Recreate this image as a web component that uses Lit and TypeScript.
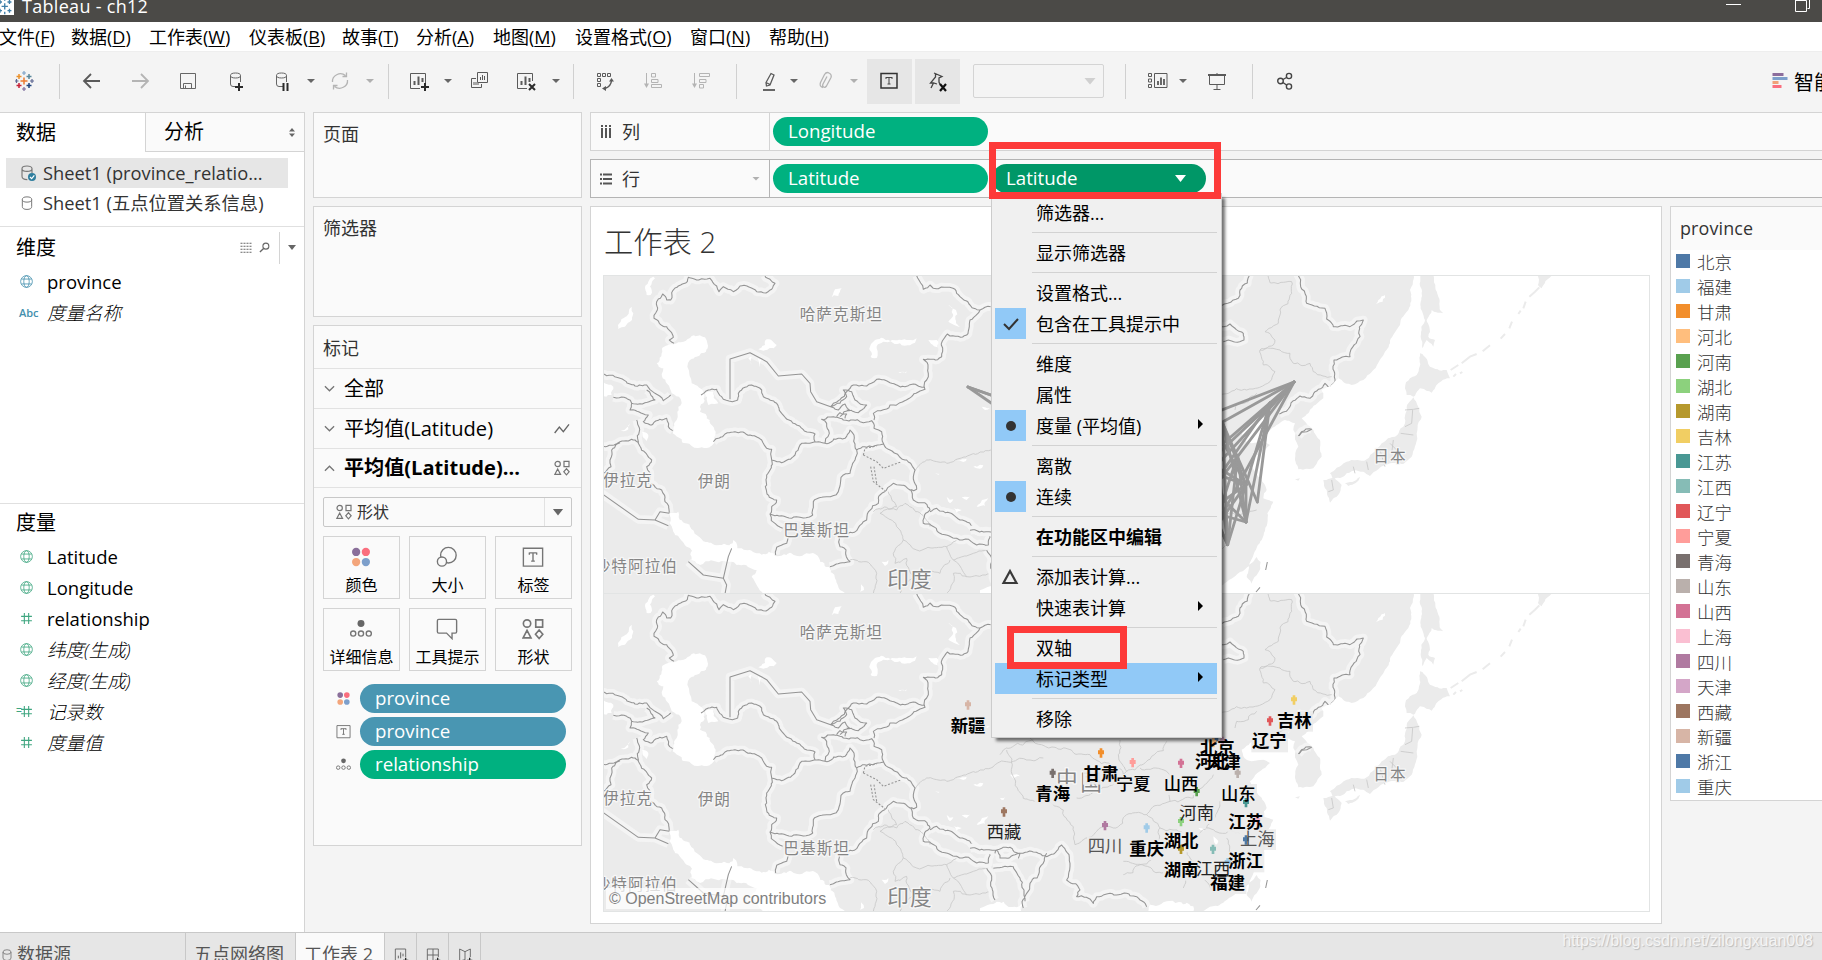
import { LitElement, html, svg, css } from "lit";
import { customElement } from "lit/decorators.js";
import { classMap } from "lit/directives/class-map.js";

/* ---------- icons, drawn on a 24px grid ---------- */
const plus = (x: number, y: number) => svg`<path d="M${x - 4} ${y}h8M${x} ${y - 4}v8" stroke="#2b2b2b" stroke-width="2"/>`;
const cross = (x: number, y: number) => svg`<path d="M${x - 3} ${y - 3}l6 6M${x + 3} ${y - 3}l-6 6" stroke="#2b2b2b" stroke-width="2"/>`;
const cyl = svg`<path d="M13 17.5H9Q6.5 17.5 6.5 15V6.500M16.500 6.500V13M6.500 6.500a5 2.500 0 0 1 10 0a5 2.500 0 0 1 -10 0" stroke="#666" fill="none"/>`;
const bars = svg`<path d="M7.500 16v-4M11.500 16V7.500M15.500 13v-4" stroke="#5a5a5a" stroke-width="2"/>`;

const icons: Record<string, unknown> = {
  logo: svg`<g stroke-width="1.500"><path d="M12 8.500v7M8.500 12h7" stroke="#eb7b30"/><path d="M7 5v5M4.500 7.500h5" stroke="#eb912c"/>
    <path d="M17 5v5M14.500 7.500h5" stroke="#59879b"/><path d="M7 14v5M4.500 16.500h5" stroke="#c72037"/><path d="M17 14v5M14.500 16.500h5" stroke="#1f447e"/>
    <path d="M12 2v4M10 4h4" stroke="#7fa3c8" stroke-width="1.200"/><path d="M12 18v4M10 20h4" stroke="#7b6a9b" stroke-width="1.200"/><path d="M4.500 10v4M3 12h3.500" stroke="#5c6692" stroke-width="1.200"/><path d="M20 10v4M18 12h4" stroke="#5c6692" stroke-width="1.200"/></g>`,
  app: svg`<g stroke-width="1.700" stroke="#3f7fa8"><path d="M12 8v8M8 12h8M6 4v5M3.500 6.500h5M18 4v5M15.500 6.500h5M6 15v5M3.500 17.500h5M18 15v5M15.500 17.500h5M12 2v3M12 19v3"/></g>`,
  back: svg`<path d="M20 12H4.500M11 5L4 12l7 7" stroke="#5a5a5a" stroke-width="1.800" fill="none"/>`,
  fwd: svg`<path d="M4 12h15.500M13 5l7 7l-7 7" stroke="#b4b4b4" stroke-width="1.800" fill="none"/>`,
  save: svg`<path d="M4.500 4.500h15v15h-15zM7.500 19v-4.500h8V19M9.500 19v-2.500" stroke="#666" fill="none"/>`,
  dbadd: svg`${cyl}${plus(15, 18)}`,
  dbpause: svg`${cyl}<path d="M13.500 14v8M17.500 14v8" stroke="#2b2b2b" stroke-width="2"/>`,
  refresh: svg`<path d="M4.500 13a8 7.500 0 0 1 13-6.500M19.500 11a8 7.500 0 0 1 -13 6.500M18.500 3.500v4h-4M5.500 20.500v-4h4" stroke="#b4b4b4" stroke-width="1.300" fill="none"/>`,
  sheetadd: svg`<path d="M13 19.500H3.500v-15h15V14" stroke="#5a5a5a" fill="none"/>${bars}${plus(18, 18)}`,
  sheetx: svg`<path d="M13 19.500H3.500v-15h15V12" stroke="#5a5a5a" fill="none"/>${bars}${cross(18, 18)}`,
  dup: svg`<path d="M10.500 3.500h10v10h-10zM9 9.500H4.500v9h10V15" stroke="#5a5a5a" fill="none"/><path d="M13.500 11V8M15.500 11V6M17.500 11V7M7 16v-3M9 16v-3M11 16v-2" stroke="#5a5a5a"/>`,
  swap: svg`<path d="M4.500 4.500h3v3h-3zM9.500 4.500h3v3h-3zM14.500 4.500h3v3h-3zM4.500 9.500h3v3h-3zM4.500 14.500h3v3h-3z" stroke="#5a5a5a" fill="none"/><path d="M12 19.500q6-2 6.500-8" stroke="#5a5a5a" stroke-width="1.500" fill="none"/><path d="M9 19.500l4-2.500v5zM18.500 9l-2.500 3.500h5z" fill="#5a5a5a"/>`,
  sasc: svg`<path d="M4.500 4v13M9.500 4.500h4v3.500h-4zM9.500 10.500h6.500v3h-6.500zM9.500 15.500h10v3h-10z" stroke="#b4b4b4" fill="none"/><path d="M2 14.500h5L4.500 19z" fill="#b4b4b4"/>`,
  sdesc: svg`<path d="M4.500 4v13M9.500 4.500h10v3h-10zM9.500 10.500h6.500v3h-6.500zM9.500 15.500h4v3.500h-4z" stroke="#b4b4b4" fill="none"/><path d="M2 14.500h5L4.500 19z" fill="#b4b4b4"/>`,
  pen: svg`<path d="M14 4.500l3 1.500l-4 10l-3.500 1l-.5-3.500zM9 13.500l4 2" stroke="#5a5a5a" stroke-width="1.300" fill="none"/><path d="M6 21h12" stroke="#666" stroke-width="2"/>`,
  clip: svg`<path d="M9 18.500q-4-1-2.500-5l4-8q2-3 4.500-1.500q3 1.500 2 4.500l-4.500 8.500q-1.500 2-3 1q-1.500-1-.5-3l4-7.500" stroke="#b4b4b4" stroke-width="1.300" fill="none"/>`,
  tbox: svg`<path d="M3 4.500h16v14.500H3z" stroke="#333" stroke-width="1.500" fill="none"/><path d="M8 8.500h6M11 8.500V15M9.500 15h3M8 8v2M14 8v2" stroke="#444" fill="none"/>`,
  pin: svg`<path d="M8 4l8 3.500l-3 1.500v4l1 2.500M9.500 4.500v3.500l-5 6h3l3.500 1M7.500 14L5 19" stroke="#444" stroke-width="1.300" fill="none"/><path d="M14 15l6 7M20 15l-6 7" stroke="#111" stroke-width="2.200"/>`,
  showme: svg`<path d="M2.500 4.500h3v3h-3zM2.500 10h3v3h-3zM2.500 15.500h3v3h-3zM8.500 4.500h12.500v14H8.500z" stroke="#5a5a5a" fill="none"/><path d="M12 16v-4M15 16V8.500M18 16v-6" stroke="#5a5a5a" stroke-width="1.800"/>`,
  present: svg`<path d="M3 6h18" stroke="#5a5a5a" stroke-width="2"/><path d="M4.500 6v9.500h15V6M12 4v1M12 16v4.500M8.500 20.500h7" stroke="#5a5a5a" fill="none"/>`,
  share: svg`<g stroke="#444" stroke-width="1.400" fill="none"><circle cx="7.500" cy="12" r="2.800"/><circle cx="16" cy="7" r="2.600"/><circle cx="16" cy="17.500" r="2.600"/><path d="M10 10.500l3.500-2M10 13.500l3.500 2.500"/></g>`,
  smart: svg`<path d="M2.500 5.500h11" stroke="#8c6d9c" stroke-width="3"/><path d="M2.500 9.500h15" stroke="#7d9fcb" stroke-width="3"/><path d="M2.500 13.500h6" stroke="#f0a178" stroke-width="3"/><path d="M2.500 17.500h9" stroke="#fa6e7e" stroke-width="3"/>`,
  dots4: svg`<circle cx="6.700" cy="6.500" r="4.500" fill="#8a6f9a"/><circle cx="17.300" cy="6.500" r="4.500" fill="#fa6e7e"/><circle cx="6.700" cy="17.500" r="4.500" fill="#f3a57b"/><circle cx="17.300" cy="17.500" r="4.500" fill="#7d9fcb"/>`,
  size: svg`<g stroke="#757575" stroke-width="1.500" fill="#fafafa"><circle cx="13.500" cy="10" r="8.500"/><circle cx="6.500" cy="17" r="5"/></g>`,
  label: svg`<path d="M1.500 2.500h21v19.500h-21z" stroke="#757575" stroke-width="1.500" fill="none"/><path d="M8 7.500h8M12 7.500v9M10 16.500h4M8 7v2.500M16 7v2.500" stroke="#757575" stroke-width="1.500"/>`,
  detail: svg`<circle cx="12" cy="6" r="3.800" fill="#666"/><g fill="none" stroke="#757575" stroke-width="1.500"><circle cx="3.500" cy="17" r="2.800"/><circle cx="12" cy="17" r="2.800"/><circle cx="20.500" cy="17" r="2.800"/></g>`,
  tip: svg`<path d="M3 1.500h18q1.500 0 1.500 1.500v12q0 1.500-1.500 1.500H17.500v6l-6-6H3q-1.500 0-1.500-1.500V3q0-1.500 1.500-1.500z" stroke="#757575" stroke-width="1.500" fill="none"/>`,
  shapes: svg`<g stroke="#757575" stroke-width="1.800" fill="none"><circle cx="5.500" cy="6" r="4"/><path d="M15 2h7.500v8h-7.500zM5.500 13.500l4.300 8.200H1.200zM18.700 13l4 4.700l-4 4.600l-4-4.600z"/></g>`,
  globe: svg`<g stroke="currentColor" stroke-width="1.500" fill="none"><circle cx="12" cy="12" r="10.800"/><ellipse cx="12" cy="12" rx="5" ry="10.800"/><path d="M2.500 7.500h19M2.500 16.500h19"/></g>`,
  hash: svg`<path d="M8 2v20M16 2v20M2 8h20M2 16h20" stroke="currentColor" stroke-width="2"/>`,
  line: svg`<path d="M1 18L8 9l6 7l8.500-11" stroke="#666" stroke-width="2" fill="none"/>`,
  down: svg`<path d="M2 7l10 10L22 7" stroke="#757575" stroke-width="2.800" fill="none"/>`,
  up: svg`<path d="M2 17L12 7l10 10" stroke="#757575" stroke-width="2.800" fill="none"/>`,
  db: svg`<path d="M4 6v12q0 5 8 5t8-5V6M4 6a8 4.500 0 0 1 16 0a8 4.500 0 0 1 -16 0" stroke="#777" stroke-width="1.700" fill="none"/>`,
  dbok: svg`<path d="M11 22q-8 0-8-5V5M18 5v7M3 5.500a7.500 4 0 0 1 15 0a7.500 4 0 0 1 -15 0" stroke="#777" stroke-width="1.700" fill="none"/><circle cx="18" cy="18" r="6" fill="#2f7e9e"/><path d="M15 18l2.500 2.500L21.500 15.500" stroke="#fff" stroke-width="1.800" fill="none"/>`,
  grid: svg`<path d="M1 2.500h22M1 8.500h22M1 14.500h22M1 20.500h22" stroke="#666" stroke-width="2" stroke-dasharray="4 2"/>`,
  mag: svg`<circle cx="15" cy="9" r="6.500" stroke="#666" stroke-width="2.400" fill="none"/><path d="M10 14l-8 8" stroke="#666" stroke-width="3"/>`,
  tabsheet: svg`<path d="M15 21H3.500V3H19v12" stroke="#666" stroke-width="1.400" fill="none"/><path d="M8 17v-4M11.500 17V8M15 14v-4" stroke="#666" stroke-width="1.500"/>${plus(19, 20)}`,
  tabdash: svg`<path d="M15 21H3.500V3H20v12M3.500 12H20M12 3v18" stroke="#666" stroke-width="1.400" fill="none"/>${plus(19, 20)}`,
  tabstory: svg`<path d="M14 21l-2-2l-8 2V3l8 4l8-4v12M12 7v12" stroke="#666" stroke-width="1.400" fill="none"/>${plus(19, 20)}`,
};
const icon = (name: string, size = 24) => html`<svg class="ic" width=${size} height=${size} viewBox="0 0 24 24">${icons[name]}</svg>`;

/* ---------- map geometry ---------- */
let seed = 7;
const rnd = () => ((seed = (seed * 16807) % 2147483647) / 2147483647) - 0.5;
type Pt = [number, number];
function split(a: Pt, b: Pt, k: number, out: Pt[]) {
  const len = Math.hypot(b[0] - a[0], b[1] - a[1]);
  if (len > 11) {
    const m: Pt = [(a[0] + b[0]) / 2 + rnd() * len * k, (a[1] + b[1]) / 2 + rnd() * len * k];
    split(a, m, k, out);
    split(m, b, k, out);
  } else out.push(b);
}
function rough(src: string, k = 0.32) {
  return src.split("M").filter((s) => s.trim()).map((part) => {
    const closed = part.includes("Z");
    const pts = part.replace("Z", "").trim().split(/\s+/).map((p) => p.split(",").map(Number) as Pt);
    const out: Pt[] = [pts[0]];
    for (let i = 1; i < pts.length; i++) split(pts[i - 1], pts[i], k, out);
    if (closed) split(pts[pts.length - 1], pts[0], k, out);
    return "M" + out.map((p) => p.map((v) => v.toFixed(0)).join(",")).join("L") + (closed ? "Z" : "");
  }).join("");
}

const westWater = rough(
  "M230,250 275,228 315,232 318,275 290,290 262,320 275,370 300,385 310,430 300,455 330,480 342,550 300,563 260,550 240,535 218,520 230,480 232,455 245,430 215,400 188,355 190,325 170,310 185,280Z" +
  "M208,762 235,755 255,790 290,825 360,855 400,840 412,865 470,880 525,888 645,882 660,905 690,925 705,955 738,1002 490,1002 455,950 470,930 410,915 395,905 350,905 300,915 275,900 260,860 225,825 208,790Z" +
  "M315,400 340,395 355,430 325,435Z M475,268 500,238 530,255 490,272Z M445,295 455,290 455,315Z M468,290 485,300 480,322Z" +
  "M812,290 815,250 850,235 905,240 950,235 945,248 900,250 850,245 830,265 825,295Z M0,355 40,380 35,405 0,412Z" +
  "M55,208 70,175 95,140 100,160 75,200Z M62,512 90,490 85,508Z M695,112 705,88 725,85 715,108Z M1045,135 1068,150 1066,178 1080,200 1045,185 1060,165Z" +
  "M140,105 145,65 160,50 165,55 150,80 152,105Z M895,338 920,334 918,340Z M125,515 145,525 140,552Z M985,240 1015,245 1012,262Z M845,905 865,900 855,918Z M780,995 782,968 792,990Z" +
  "M1085,712 1110,710 1100,720Z M1130,740 1165,715 1155,738Z M1040,712 1060,718 1050,730Z M1060,745 1085,750 1070,758Z M1005,640 1025,638 1015,644Z", 0.4);

const borders = rough(
  "M222,250 208,240 220,232 200,200 178,190 162,175 172,150 170,125 188,102 200,120 212,120 215,98 235,78 262,65 265,52 290,60 330,55 350,78 357,95 370,80 400,95 420,78 445,80 470,95 490,98 515,88 525,70 510,58 495,47" +
  "M950,47 970,88 990,75 1000,85 1040,82 1065,88 1080,110 1110,135 1140,150 1172,140 M1140,150 1110,180 1100,225 1042,222 1025,290 970,298 985,350 975,388 935,410 900,428 870,435 820,460 822,480" +
  "M975,382 940,372 870,368 830,358 800,378 760,375 740,395 700,430 692,440" +
  "M303,405 325,390 350,388 370,418 413,420 415,400 435,382 455,375 485,390 490,410 530,430 545,460 590,495 645,522 645,545" +
  "M340,545 375,522 405,515 450,525 485,540 500,565 515,568 515,600 545,608 580,590 605,550 645,545 675,550 715,535 735,535 750,510 762,525 765,560 770,570" +
  "M515,600 510,630 500,645 508,712 530,720 510,762 530,795 548,805 M510,762 560,772 638,765 640,725 680,710 715,695 730,645 750,640 765,600 770,570 850,552" +
  "M675,550 688,520 680,490 665,478 700,470 720,475 760,480 815,482 822,505 845,515 850,550 870,570 920,600 945,630 940,650 950,688 930,690 880,670 858,692 840,705 835,730 800,780 770,812 745,820" +
  "M932,690 940,720 990,750 970,790 1020,820 1070,835 1130,855 1165,855 1172,815 1130,810 1080,780 1010,745 990,755" +
  "M718,830 720,860 738,870 750,905 690,920 M565,830 560,850 530,862 527,885" +
  "M0,342 60,355 90,372 140,375 165,400 190,422 212,405 M40,412 80,415 95,430 135,428 165,420 140,390 M95,430 90,450 145,465 130,485 155,495 200,475 205,500 218,512" +
  "M110,480 115,550 155,600 140,620 145,665 185,690 195,725 208,758 M0,557 60,545 115,548 M60,548 35,570 33,620 10,640" +
  "M692,440 720,430 740,410 730,390 755,395 765,420 800,435 775,458 740,450 M692,440 715,450 735,432 748,450 720,470 M710,470 720,458 740,462 735,475", 0.3) +
  "M692,440L650,425L632,395L630,370L605,342L535,348L500,305L450,278L390,297L390,418M0,697L115,778L165,780L180,755L208,760M165,780L205,797M265,905L310,945L370,955L385,890L395,865M370,955L380,975L375,1002";
const dotted = "M790,585L795,565L830,558M790,585L830,605L850,625L905,605M812,620L820,665L855,692M822,620L830,670";
const thin = rough(
  "M945,632 980,600 1060,605 1110,585 1173,570 1240,550 1330,540 M865,695 890,740 840,760 890,800 910,840 M820,755 890,750 915,730 990,800 M910,840 880,880 885,910 920,895 M750,900 790,905 830,940 820,1000 M910,840 950,870 1040,860 1060,900 1120,880 1170,880 M1040,860 1070,840 M920,895 940,950 900,1000 M1050,900 1020,940 940,960 M1100,950 1060,940 1040,1000 M1060,900 1100,950 1170,940");

const eastOcean = rough(
  "M1304,200 1302,262 1290,300 1285,360 1260,405 1215,485 1180,540 1150,570 1115,585 1095,580 1075,565 1050,590 1025,600 1030,625 985,670 965,685 1000,720 1020,750 1025,800 1000,835 955,838 945,810 955,770 940,720 945,700 915,690 890,705 860,725 850,718 868,690 840,678 810,705 785,725 790,745 815,760 850,755 870,765 840,790 810,820 835,860 860,900 850,925 880,935 862,970 862,1000 845,1050 820,1096 780,1146 740,1176 690,1196 640,1225 640,1700 2400,1700 2400,-500 1304,-500Z", 0.22);
const eastLand = rough(
  "M830,1101 842,1116 830,1156 815,1181 800,1161 805,1126Z" +
  "M1030,870 1060,862 1085,885 1070,920 1050,938 1040,900Z M1095,880 1140,860 1135,872 1105,888Z" +
  "M1050,850 1100,815 1160,808 1205,760 1245,740 1275,700 1285,640 1300,622 1325,680 1310,730 1295,800 1270,822 1230,820 1195,838 1170,858 1150,845 1100,850 1060,868Z" +
  "M1320,490 1350,530 1400,540 1410,565 1375,580 1355,608 1320,595 1300,620 1280,615 1275,595 1290,565 1310,555Z" +
  "M1325,250 1360,250 1375,320 1390,370 1355,360 1340,390 1345,440 1365,450 1360,470 1340,450 1328,475 1322,440 1335,390 1325,310Z" +
  "M1674,250 1720,250 1685,295 1674,285Z M945,868 960,865 955,872Z", 0.25);
const kurils = "M1412,540L1435,525M1445,520L1470,500L1490,492M1508,484L1530,466M1562,446L1575,432M1588,415L1596,395M1615,372L1622,362M1630,355L1637,335M1648,320L1665,305L1678,292M1420,560L1428,552M1440,550L1447,546";
const eastBorders = rough(
  "M725,347 775,325 780,300 808,250 M955,250 980,340 1035,355 1060,410 1110,410 1150,390 1140,440 1110,500 1062,510 1065,575 1050,595 1035,580 1005,605 990,625 960,618 930,650 898,672 M700,415 750,402 790,430 792,450 730,455 M955,738 965,725 995,718" +
  "M-30,1021 50,1026 60,1050 200,1046 245,1011 270,1066 260,1116 300,1146 290,1166 340,1186 350,1166 390,1156 440,1156 470,1166 500,1196 M45,1036 50,1026 90,1018 120,1036 115,1051 M20,1081 35,1116 45,1176 M130,1200 150,1126 200,1036 M40,1081 100,1076 120,1110 135,1180", 0.3);
const eastThin = rough(
  "M860,250 870,278 935,275 935,310 900,360 895,400 855,425 885,450 880,465 840,480 900,480 930,490 940,520 990,520 1000,545 1055,560 M840,480 850,525 885,545 870,575 800,600 700,610 M765,660 770,640 830,610" +
  "M60,740 80,720 160,696 M80,726 100,806 130,871 250,906 280,956 285,1010 M150,690 250,720 330,740 430,800 M420,696 415,740 440,790 500,760 560,700 M440,790 400,830 330,860 290,870 M480,780 560,790 570,880 640,870 700,800 M570,880 500,920 440,920 400,960 M500,920 540,960 620,990 680,960 720,880 M540,960 520,1050 430,1100 M620,990 640,1060 610,1140 M680,960 760,970 830,960 M640,1060 700,1150 M740,990 750,1050 700,1100 M430,1060 520,1090 600,1080 M285,1010 360,960 400,960");
const japanThin = "M1275,660L1300,658L1318,655M1298,660L1295,700L1275,710M1262,730L1300,735M1230,760L1260,790M1160,815L1165,840M1120,830L1125,850M1200,780L1215,830M1240,750L1235,790M1055,870L1060,900L1045,905";
const eastLakes = rough("M1195,330 1215,315 1208,335 1188,342Z M655,960 690,952 670,970Z M700,985 715,1000 708,1010Z M5,650 30,655 15,660Z M90,800 120,805 100,812Z M60,870 75,868 70,876Z M-70,812 -40,806 -50,816Z M-20,830 10,826 0,836Z M0,1201 50,1181 130,1186 120,1220 0,1220Z M510,1190 560,1180 640,1195 640,1225 500,1225Z", 0.4);

const nodes: Record<string, Pt> = {
  吉林: [942, 540], 辽宁: [870, 603], 北京: [706, 660], 天津: [728, 664], 河北: [700, 668], 山东: [773, 760], 山西: [603, 730], 河南: [650, 815], 江苏: [798, 848], 上海: [832, 900],
  湖北: [603, 905], 浙江: [798, 960], 湖南: [603, 988], 江西: [699, 988], 福建: [743, 1028], 重庆: [500, 924], 四川: [375, 917], 宁夏: [458, 728], 甘肃: [363, 699], 青海: [218, 760], 西藏: [72, 876], 新疆: [-36, 555],
};
const edges = "吉林 宁夏,吉林 山西,吉林 河南,吉林 湖北,吉林 湖南,吉林 江西,吉林 重庆,辽宁 上海,辽宁 湖南,辽宁 浙江,辽宁 江苏,天津 江苏,天津 上海,天津 浙江,天津 福建,天津 湖北,河北 福建,河北 江苏,山东 江西,山东 福建,江苏 福建,江苏 湖南,江苏 江西,江苏 山西,江苏 浙江,浙江 山东,浙江 湖北,浙江 河南,福建 山西,福建 河南,新疆 宁夏,新疆 重庆,新疆 江苏";

interface Prov { n: string; c: string; lx: number; ly: number; w?: number; f?: string }
const provinces: Prov[] = [
  { n: "北京", c: "#4e79a7", lx: 712, ly: 685, w: 600 },
  { n: "福建", c: "#a0cbe8", lx: 743, ly: 1090, w: 600 },
  { n: "甘肃", c: "#f28e2b", lx: 363, ly: 762, w: 600 },
  { n: "河北", c: "#ffbe7d", lx: 697, ly: 727, w: 600 },
  { n: "河南", c: "#59a14f", lx: 650, ly: 880 },
  { n: "湖北", c: "#8cd17d", lx: 603, ly: 965, w: 700 },
  { n: "湖南", c: "#b6992d", lx: 603, ly: 1050, w: 600 },
  { n: "吉林", c: "#f1ce63", lx: 943, ly: 603, w: 600 },
  { n: "江苏", c: "#499894", lx: 797, ly: 908, w: 700 },
  { n: "江西", c: "#86bcb6", lx: 699, ly: 1048 },
  { n: "辽宁", c: "#e15759", lx: 868, ly: 665, w: 600 },
  { n: "宁夏", c: "#ff9d9a", lx: 460, ly: 792, w: 500 },
  { n: "青海", c: "#79706e", lx: 218, ly: 822, w: 600 },
  { n: "山东", c: "#bab0ac", lx: 775, ly: 822, w: 500 },
  { n: "山西", c: "#d37295", lx: 603, ly: 793, w: 500 },
  { n: "上海", c: "#fabfd2", lx: 832, ly: 958, f: "#555" },
  { n: "四川", c: "#b07aa1", lx: 375, ly: 980, f: "#555" },
  { n: "天津", c: "#d4a6c8", lx: 730, ly: 727, w: 600 },
  { n: "西藏", c: "#9d7660", lx: 72, ly: 938 },
  { n: "新疆", c: "#d7b5a6", lx: -36, ly: 618, w: 700 },
  { n: "浙江", c: "#4e79a7", lx: 797, ly: 1025, w: 700 },
  { n: "重庆", c: "#a0cbe8", lx: 500, ly: 988, w: 700 },
];

@customElement("geo-map")
class GeoMap extends LitElement {
  static properties = { mode: {} };
  declare mode: string;
  static styles = css`
    :host { display: block; height: 317px; overflow: hidden; }
    svg { display: block; margin: -1px 0 0 -1px; }
    text { font-family: "Noto Sans CJK SC", sans-serif; text-anchor: middle; }
    .place { font-size: 47px; letter-spacing: 3px; fill: #858585; stroke: #f6f6f6; stroke-width: 8px; paint-order: stroke; stroke-linejoin: round; }
    .big { font-size: 65px; }
    .mark { font-size: 52px; }
    .halo { fill: none; stroke: #f4f4f4; stroke-width: 26px; stroke-linejoin: round; }
    .line { fill: none; stroke: #949494; stroke-width: 3.200px; stroke-linejoin: round; }
    .thin { fill: none; stroke: #c6c6c6; stroke-width: 2.400px; }
    .dash { stroke-dasharray: 6 5; }
    .water { fill: #fff; }
    .land { fill: #ebebeb; }
    .kuril { fill: none; stroke: #ebebeb; stroke-width: 6px; }
    .link { stroke: #999; stroke-width: 8.500px; stroke-linecap: round; }
  `;
  render() {
    return html`<svg width="1046" height="318" viewBox="0 0 1046 318">
      <rect width="1046" height="318" class="land"></rect>
      <g transform="translate(-3 -15) scale(.33333)">
        <path class="halo" d=${borders}/>
        <path class="water" d=${westWater}/>
        <path class="thin" d=${thin}/>
        <path class="line" d=${borders}/>
        <path class="line dash" d=${dotted}/>
        <text class="place" x="724" y="181">哈萨克斯坦</text>
        <text class="place" x="343" y="681">伊朗</text>
        <text class="place" x="84" y="678">伊拉克</text>
        <text class="place" x="650" y="828">巴基斯坦</text>
        <text class="place" x="109" y="936">沙特阿拉伯</text>
        <text class="place big" x="930" y="981">印度</text>
      </g>
      <g transform="translate(377 -85) scale(.33333)">
        <path class="halo" d=${eastBorders}/>
        <path class="water" d=${eastLakes}/>
        <path class="thin" d=${eastThin}/>
        <path class="line" d=${eastBorders}/>
        <path class="water" d=${eastOcean}/>
        <path class="land" d=${eastLand}/>
        <path class="kuril" d=${kurils}/>
        <path class="thin" d=${japanThin}/>
        <path class="line" d="M957,738L965,727L980,725L995,718M857,1140L862,1116M828,1206L840,1192"/>
        <text class="place" x="1230" y="817">日本</text>
      </g>
      ${this.mode === "links" ? this.links() : this.marks()}
    </svg>`;
  }
  links() {
    return svg`<g transform="translate(377 -73) scale(.33333)">${edges.split(",").map((e) => {
      const [a, b] = e.split(" ").map((k) => nodes[k]);
      return svg`<line class="link" x1=${a[0]} y1=${a[1]} x2=${b[0]} y2=${b[1]}/>`;
    })}</g>`;
  }
  marks() {
    return svg`<g transform="translate(377 -73) scale(.33333)">
      <text class="place big" x="262" y="800">中</text><text class="place big" x="335" y="810">国</text>
      ${provinces.map((p) => svg`<rect x=${p.lx - 54} y=${p.ly - 30} width="110" height="62" fill="#ebebeb" fill-opacity=".9"/>`)}
      ${provinces.map((p) => {
        const [x, y] = nodes[p.n];
        return svg`<path fill=${p.c} d=${`M${x - 4},${y - 14}h8v6h5v12h-5v10h-8v-10h-5v-12h5z`}/>`;
      })}
      ${provinces.map((p) => svg`<text class="mark" x=${p.lx} y=${p.ly + 17} font-weight=${p.w ?? 400} fill=${p.f ?? (p.w ? "#000" : "#222")}>${p.n}</text>`)}
    </g>`;
  }
}

/* ---------- chrome data ---------- */
const menus: [string, string, number][] = [
  ["文件", "F", 72], ["数据", "D", 78], ["工作表", "W", 100], ["仪表板", "B", 93], ["故事", "T", 74], ["分析", "A", 77], ["地图", "M", 82], ["设置格式", "O", 115], ["窗口", "N", 79], ["帮助", "H", 80],
];
const tools: [string, number][] = [
  ["logo", 12], ["|", 23], ["back", 20], ["fwd", 24], ["save", 24], ["dbadd", 24], ["dbpause", 22], ["v", 13], ["refresh", 13], ["w", 14], ["|", 14],
  ["sheetadd", 18], ["v", 13], ["dup", 15], ["sheetx", 23], ["v", 14], ["|", 13], ["swap", 19], ["sasc", 25], ["sdesc", 24], ["|", 22],
  ["pen", 20], ["v", 9], ["clip", 16], ["w", 12], ["*tbox", 9], ["*pin", 3], ["combo", 13], ["|", 21], ["showme", 20], ["v", 9], ["present", 18], ["|", 23], ["share", 20], ["smart", 473],
];
const measures: [string, string, boolean][] = [
  ["globe", "Latitude", false], ["globe", "Longitude", false], ["hash", "relationship", false], ["globe", "纬度(生成)", true], ["globe", "经度(生成)", true], ["=hash", "记录数", true], ["hash", "度量值", true],
];
const menuItems: (null | { t: string; m?: string; sub?: boolean; bold?: boolean; hot?: boolean })[] = [
  { t: "筛选器..." }, null, { t: "显示筛选器" }, null, { t: "设置格式..." }, { t: "包含在工具提示中", m: "check" }, null,
  { t: "维度" }, { t: "属性" }, { t: "度量 (平均值)", m: "dot", sub: true }, null, { t: "离散" }, { t: "连续", m: "dot" }, null,
  { t: "在功能区中编辑", bold: true }, null, { t: "添加表计算...", m: "tri" }, { t: "快速表计算", sub: true }, null, { t: "双轴" }, { t: "标记类型", sub: true, hot: true }, null, { t: "移除" },
];

@customElement("app-root")
class AppRoot extends LitElement {
  static styles = css`
    :host { display: block; width: 1822px; height: 960px; overflow: hidden; position: relative; background: #f4f4f4;
      font-family: "Open Sans", "Noto Sans CJK SC", sans-serif; font-size: 18px; color: #000; white-space: nowrap; }
    * { box-sizing: border-box; }
    svg { display: block; flex: none; }
    .title { height: 22px; background: #4b4a47; color: #fff; display: flex; overflow: hidden; }
    .title .app { width: 14px; height: 15px; background: #fff; overflow: hidden; }
    .title .name { margin: -7px 0 0 8px; line-height: 26px; font-size: 18px; flex: 1; letter-spacing: .3px; }
    .title .win { margin-right: 11px; }
    .menubar { height: 29px; background: #fff; display: flex; overflow: hidden; line-height: 31px; font-size: 18px; }
    .menubar span:first-child { margin-left: -1px; }
    .menubar span { flex: none; }
    .menubar u { text-decoration-thickness: 1px; text-underline-offset: 2px; }
    .toolbar { height: 61px; display: flex; align-items: center; border-top: 1px solid #eee; padding-bottom: 2px; }
    .toolbar > * { flex: none; }
    .vsep { width: 1px; height: 35px; background: #d0d0d0; }
    .caret { width: 8px; height: 4px; background: #666; clip-path: polygon(0 0, 100% 0, 50% 100%); }
    .caret.l { background: #b0b0b0; }
    .tbtn { width: 45px; height: 45px; background: #e6e6e6; display: grid; place-items: center; }
    .combo { width: 131px; height: 34px; border: 1px solid #d4d4d4; border-radius: 2px; display: flex; align-items: center; justify-content: flex-end; padding-right: 7px; }
    .combo i { width: 12px; height: 7px; background: #d0d0d0; clip-path: polygon(0 0, 100% 0, 50% 100%); }
    .smart { display: flex; align-items: center; font-size: 20px; }
    .body { display: flex; height: 820px; }
    .side { width: 305px; background: #fff; border-right: 1px solid #d4d4d4; border-top: 1px solid #d4d4d4; flex: none; }
    .tabs { display: flex; height: 39px; font-size: 20px; line-height: 40px; }
    .tabs .a { width: 145px; padding-left: 16px; }
    .tabs .b { flex: 1; background: #fafafa; border-left: 1px solid #d4d4d4; border-bottom: 1px solid #d4d4d4; padding: 0 9px 0 18px; display: flex; align-items: center; justify-content: space-between; }
    .ds { height: 30px; margin: 0 16px 0 6px; display: flex; align-items: center; color: #333; padding-left: 14px; font-size: 18.300px; }
    .ds .i { width: 23px; flex: none; }
    .ds.sel { background: #e6e6e6; margin-top: 6px; }
    .ds .t { line-height: 28px; }
    .dim { border-top: 1px solid #e0e0e0; margin-top: 8px; height: 277px; }
    .mea { border-top: 1px solid #e0e0e0; height: 300px; }
    .h { height: 37px; display: flex; align-items: center; font-size: 20px; padding-left: 16px; }
    .dim .h { height: 39px; padding-top: 2px; }
    .h .t { flex: 1; line-height: 30px; }
    .h .vs { width: 1px; height: 32px; background: #d4d4d4; margin: 0 8px 0 9px; }
    .h .sp { width: 7px; }
    .h .caret { margin-right: 8px; height: 5px; }
    .f { height: 31px; display: flex; align-items: center; font-size: 18.500px; color: #000; }
    .f .i { width: 47px; padding-left: 20px; color: #4490ae; display: flex; }
    .f .abc { font: 600 11px "Open Sans", sans-serif; margin-left: -1px; }
    .mea .i { color: #3fa680; }
    .f .t { line-height: 28px; }
    .f.it .t { font-style: italic; font-weight: 300; }
    .eq { font: 10px "Liberation Sans"; margin-left: -4px; width: 4px; }
    .cards { width: 269px; margin: 0 8px; flex: none; display: flex; flex-direction: column; gap: 8px; color: #333; }
    .card { border: 1px solid #d4d4d4; background: #fafafa; line-height: 26px; padding: 8px 9px; }
    .pages { height: 86px; } .filters { height: 111px; }
    .marks { height: 521px; padding: 0; }
    .mh { height: 42px; padding: 9px 9px 0; }
    .mr { height: 40px; border-top: 1px solid #e2e2e2; display: flex; align-items: center; font-size: 20.100px; color: #000; padding: 0 11px 0 10px; gap: 9px; }
    .mr .t { flex: 1; line-height: 30px; }
    .mr.bold { font-weight: 700; height: 39px; }
    .mb { border-top: 1px solid #e2e2e2; padding: 9px 9px 0; }
    .dd { height: 30px; border: 1px solid #c8c8c8; border-radius: 2px; display: flex; align-items: center; font-size: 16px; padding-left: 12px; gap: 5px; }
    .dd .t { flex: 1; }
    .dd .ar { width: 27px; height: 100%; border-left: 1px solid #e2e2e2; display: grid; place-items: center; }
    .dd .ar i, .tri { width: 11px; height: 7px; background: #666; clip-path: polygon(0 0, 100% 0, 50% 100%); }
    .btns { display: grid; grid-template-columns: repeat(3, 77px); gap: 9px; margin-top: 9px; }
    .btn { height: 63px; border: 1px solid #d4d4d4; display: flex; flex-direction: column; align-items: center; justify-content: space-between; padding: 9px 0 0; font-size: 16px; color: #000; line-height: 26px; }
    .btn svg { margin-left: -2px; }
    .pr { display: flex; align-items: center; padding-left: 13px; gap: 9px; margin-bottom: 4px; }
    .pills { margin-top: 13px; }
    .pill { height: 29px; border-radius: 14.500px; background: #00b180; color: #fff; font-size: 18.700px; line-height: 28px; padding-left: 15px; }
    .pr .pill { width: 206px; }
    .blue { background: #4996b2; }
    .main { flex: 1; min-width: 0; display: flex; flex-direction: column; gap: 8px; }
    .shelf { height: 39px; border: 1px solid #d4d4d4; border-right: 0; background: #fafafa; display: flex; align-items: center; flex: none; color: #333; }
    .shelf.act { border-color: #b4b4b4; }
    .shelf .lab { width: 179px; height: 100%; border-right: 1px solid #d4d4d4; display: flex; align-items: center; padding: 0 9px 0 9px; gap: 10px; }
    .shelf.act .lab { border-color: #b4b4b4; }
    .shelf .lab .t { flex: 1; line-height: 30px; }
    .shelf .pill { width: 215px; margin-left: 3px; }
    .shelf .pill.dark { background: #009767; width: 214px; margin-left: 4px; display: flex; align-items: flex-start; justify-content: space-between; padding: 0 20px 0 14px; }
    .dark .tri { background: #fff; align-self: center; }
    .low { display: flex; gap: 8px; align-items: flex-start; }
    .sheet { width: 1072px; height: 718px; border: 1px solid #d4d4d4; background: #fff; padding: 0 0 0 12px; flex: none; }
    .st { height: 68px; line-height: 70px; font-size: 29.300px; font-weight: 300; color: #333; padding-left: 1px; }
    .maps { width: 1047px; border: 1px solid #e2e4e4; height: 637px; overflow: hidden; position: relative; }
    geo-map + geo-map { border-top: 1px solid #e2e4e4; height: 318px; box-sizing: border-box; }
    .osm { position: absolute; left: 2px; bottom: 2px; padding: 1px 4px 1px 3px; background: rgba(255,255,255,.72); font: 16px/19px "Liberation Sans"; color: #808080; }
    .legend { flex: 1; height: 595px; border: 1px solid #d4d4d4; border-right: 0; background: #fff; color: #333; overflow: hidden; }
    .lh { height: 43px; background: #fafafa; padding-left: 9px; font-size: 17.900px; line-height: 42px; letter-spacing: .15px; }
    .lr { height: 25px; display: flex; align-items: center; gap: 7px; padding-left: 5px; font-size: 17.500px; font-weight: 300; }
    .lr i { width: 14px; height: 14px; margin-top: -3px; }
    .lr span { line-height: 25px; }
    .bottom { height: 28px; background: #e6e6e6; border-top: 1px solid #c8c8c8; display: flex; overflow: hidden; color: #555; line-height: 45px; }
    .bottom > div { height: 43px; border-right: 1px solid #c8c8c8; display: flex; align-items: center; flex: none; }
    .b1 { width: 186px; padding-left: 1px; gap: 4px; } .b2 { width: 110px; padding-left: 8px; } .b3 { width: 89px; padding-left: 8px; background: #fafafa; } .b4 { width: 32px; justify-content: center; }
    .ctx { position: absolute; left: 991px; top: 193px; width: 231px; height: 545px; background: #f0f0f0; border: 1px solid #ccc; padding: 3px; box-shadow: 4px 4px 3px -1px rgba(0,0,0,.55); font-size: 18px; color: #000; }
    .mi { height: 31px; display: grid; grid-template-columns: 31px 1fr 19px; column-gap: 10px; align-items: center; width: 222px; }
    .mi .t { line-height: 30px; }
    .mi .ck { height: 31px; display: grid; place-items: center; }
    .mi .on { background: #91c9f7; }
    .mi.hot { background: #91c9f7; }
    .mi.bold { font-weight: 700; }
    .mi .go { width: 5px; height: 10px; background: #000; clip-path: polygon(0 0, 100% 50%, 0 100%); margin-top: -3px; }
    .ms { height: 9px; padding: 4px 1px 0 37px; } .ms i { display: block; height: 1px; background: #d2d2d2; }
    .red { position: absolute; border: 7px solid #fd3a39; }
    .r1 { left: 989px; top: 142px; width: 232px; height: 57px; }
    .r2 { left: 1007px; top: 626px; width: 120px; height: 43px; }
    .wm { position: absolute; right: 9px; bottom: 9px; font: 16px/20px "Liberation Sans"; color: #f4f4f4; text-shadow: 1px 1px 1px #bbb; }
  `;

  tool([n, gap]: [string, number]) {
    const st = `margin-left:${gap}px`;
    if (n === "|") return html`<i class="vsep" style=${st}></i>`;
    if (n === "v" || n === "w") return html`<i class=${classMap({ caret: true, l: n === "w" })} style=${st}></i>`;
    if (n === "combo") return html`<div class="combo" style=${st}><i></i></div>`;
    if (n[0] === "*") return html`<div class="tbtn" style=${st}>${icon(n.slice(1))}</div>`;
    if (n === "smart") return html`<div class="smart" style=${st}>${icon(n)}<span>智能推荐</span></div>`;
    return html`<div style=${st}>${icon(n)}</div>`;
  }
  mark(m?: string) {
    if (m === "check") return html`<svg width="18" height="14"><path d="M2 7l5 5L16 2" stroke="#333" stroke-width="2" fill="none"/></svg>`;
    if (m === "dot") return html`<svg width="10" height="10"><circle cx="5" cy="5" r="5" fill="#333"/></svg>`;
    if (m === "tri") return html`<svg width="20" height="18"><path d="M9 3L15.500 15H2.500z" stroke="#3a3a3a" stroke-width="2.200" fill="none"/></svg>`;
    return "";
  }
  btn(i: string, t: string) {
    return html`<div class="btn">${icon(i, 22)}<span>${t}</span></div>`;
  }

  render() {
    return html`
      <div class="title"><div class="app"><svg width="15" height="15" viewBox="6 4 19 19">${icons.app}</svg></div><div class="name">Tableau - ch12</div>
        <svg class="win" width="86" height="14"><path d="M1 4.500h15M70.500 0v11.500h11V.500h-11M84.500 0v8.500h-2" stroke="#fff" fill="none"/></svg></div>
      <div class="menubar">${menus.map(([t, k, w]) => html`<span style=${`width:${w}px`}>${t}(<u>${k}</u>)</span>`)}</div>
      <div class="toolbar">${tools.map((t) => this.tool(t))}</div>
      <div class="body">
        <div class="side">
          <div class="tabs"><div class="a">数据</div><div class="b"><span>分析</span><svg width="6" height="9"><path d="M0 3.500L3 0l3 3.500zM0 5.500h6L3 9z" fill="#666"/></svg></div></div>
          <div class="ds sel"><span class="i">${icon("dbok", 16)}</span><span class="t">Sheet1 (province_relatio...</span></div>
          <div class="ds"><span class="i">${icon("db", 14)}</span><span class="t">Sheet1 (五点位置关系信息)</span></div>
          <div class="dim">
            <div class="h"><span class="t">维度</span>${icon("grid", 12)}<span class="sp"></span>${icon("mag", 11)}<i class="vs"></i><i class="caret"></i></div>
            <div class="f"><span class="i">${icon("globe", 13)}</span><span class="t">province</span></div>
            <div class="f it"><span class="i"><span class="abc">Abc</span></span><span class="t">度量名称</span></div>
          </div>
          <div class="mea">
            <div class="h"><span class="t">度量</span></div>
            ${measures.map(([i, t, it]) => html`<div class=${classMap({ f: true, it })}><span class="i">${i[0] === "=" ? html`<span class="eq">=</span>` : ""}${icon(i.replace("=", ""), 13)}</span><span class="t">${t}</span></div>`)}
          </div>
        </div>
        <div class="cards">
          <div class="card pages">页面</div>
          <div class="card filters">筛选器</div>
          <div class="card marks">
            <div class="mh">标记</div>
            <div class="mr">${icon("down", 11)}<span class="t">全部</span></div>
            <div class="mr">${icon("down", 11)}<span class="t">平均值(Latitude)</span>${icon("line", 16)}</div>
            <div class="mr bold">${icon("up", 11)}<span class="t">平均值(Latitude)...</span>${icon("shapes", 16)}</div>
            <div class="mb">
              <div class="dd">${icon("shapes", 16)}<span class="t">形状</span><span class="ar"><i></i></span></div>
              <div class="btns">${this.btn("dots4", "颜色")}${this.btn("size", "大小")}${this.btn("label", "标签")}${this.btn("detail", "详细信息")}${this.btn("tip", "工具提示")}${this.btn("shapes", "形状")}</div>
              <div class="pills">
                <div class="pr">${icon("dots4", 15)}<div class="pill blue">province</div></div>
                <div class="pr">${icon("label", 15)}<div class="pill blue">province</div></div>
                <div class="pr">${icon("detail", 15)}<div class="pill">relationship</div></div>
              </div>
            </div>
          </div>
        </div>
        <div class="main">
          <div class="shelf"><div class="lab"><svg width="12" height="13"><path d="M2 0v13M6 0v13M10 0v13" stroke="#555" stroke-width="2" stroke-dasharray="2 1 10 0"/></svg><span class="t">列</span></div><div class="pill">Longitude</div></div>
          <div class="shelf act"><div class="lab"><svg width="12" height="12"><path d="M0 1.500h12M0 6h12M0 10.500h12" stroke="#555" stroke-width="2" stroke-dasharray="2 1 10 0"/></svg><span class="t">行</span><i class="caret l"></i></div><div class="pill">Latitude</div><div class="pill dark"><span>Latitude</span><i class="tri"></i></div></div>
          <div class="low">
            <div class="sheet"><div class="st">工作表 2</div><div class="maps"><geo-map mode="links"></geo-map><geo-map mode="marks"></geo-map><div class="osm">© OpenStreetMap contributors</div></div></div>
            <div class="legend"><div class="lh">province</div>${provinces.map((p) => html`<div class="lr"><i style=${`background:${p.c}`}></i><span>${p.n}</span></div>`)}</div>
          </div>
        </div>
      </div>
      <div class="bottom"><div class="b1">${icon("db", 12)}<span>数据源</span></div><div class="b2">五点网络图</div><div class="b3">工作表 2</div><div class="b4">${icon("tabsheet", 16)}</div><div class="b4">${icon("tabdash", 16)}</div><div class="b4">${icon("tabstory", 16)}</div></div>
      <div class="ctx">${menuItems.map((m) => m === null ? html`<div class="ms"><i></i></div>` : html`<div class=${classMap({ mi: true, hot: !!m.hot, bold: !!m.bold })}><span class=${classMap({ ck: true, on: m.m === "check" || m.m === "dot" })}>${this.mark(m.m)}</span><span class="t">${m.t}</span>${m.sub ? html`<i class="go"></i>` : ""}</div>`)}</div>
      <div class="red r1"></div><div class="red r2"></div>
      <div class="wm">https://blog.csdn.net/zilongxuan008</div>
    `;
  }
}
